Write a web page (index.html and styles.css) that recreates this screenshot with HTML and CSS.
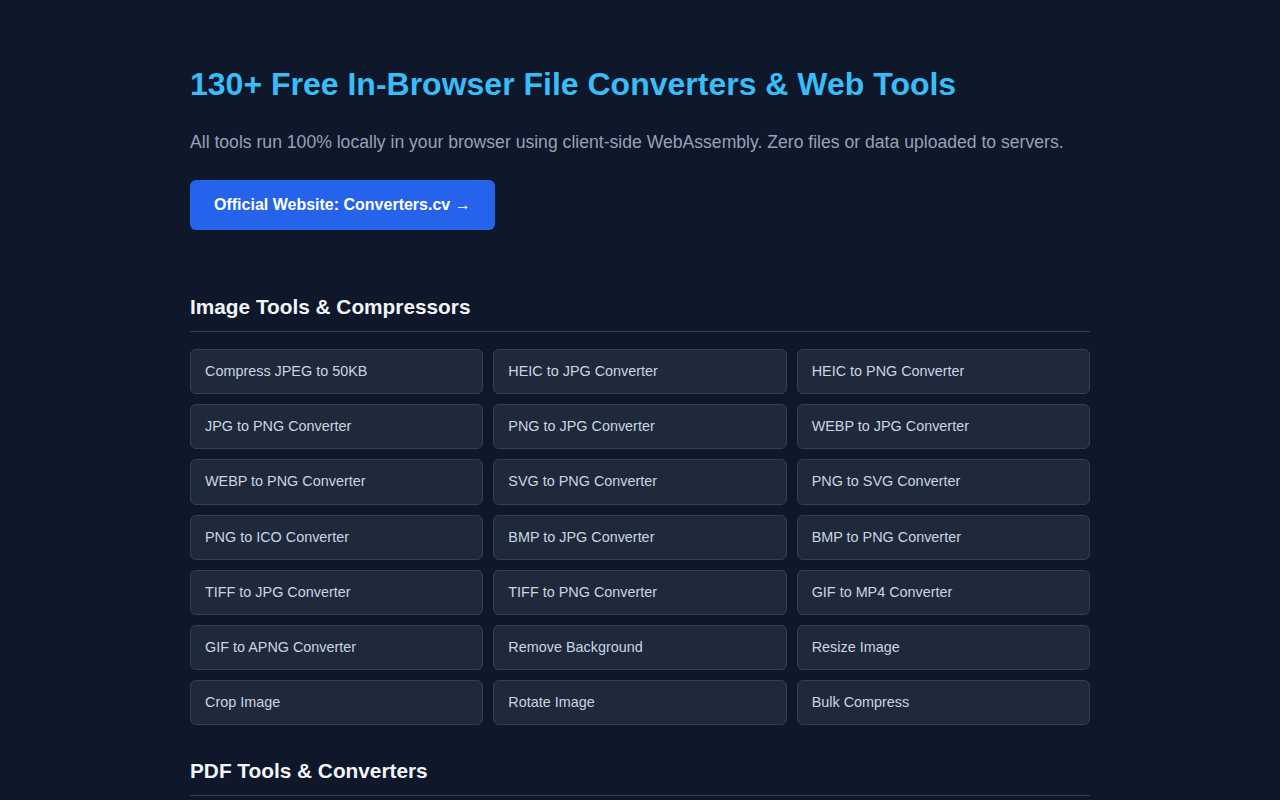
FILE: index.html
```html
<!DOCTYPE html>
<html lang="en">
<head>
<meta charset="utf-8">
<title>130+ Free In-Browser File Converters &amp; Web Tools</title>
<link rel="stylesheet" href="styles.css">
</head>
<body>
<main class="page">
  <header class="hero">
    <h1 class="hero-title">130+ Free In-Browser File Converters &amp; Web Tools</h1>
    <p class="hero-text">All tools run 100% locally in your browser using client-side WebAssembly. Zero files or data uploaded to servers.</p>
    <a class="hero-btn" href="#">Official Website: Converters.cv →</a>
  </header>

  <section class="section">
    <h2 class="section-title">Image Tools &amp; Compressors</h2>
    <div class="tool-grid">
      <a class="tool" href="#">Compress JPEG to 50KB</a>
      <a class="tool" href="#">HEIC to JPG Converter</a>
      <a class="tool" href="#">HEIC to PNG Converter</a>
      <a class="tool" href="#">JPG to PNG Converter</a>
      <a class="tool" href="#">PNG to JPG Converter</a>
      <a class="tool" href="#">WEBP to JPG Converter</a>
      <a class="tool" href="#">WEBP to PNG Converter</a>
      <a class="tool" href="#">SVG to PNG Converter</a>
      <a class="tool" href="#">PNG to SVG Converter</a>
      <a class="tool" href="#">PNG to ICO Converter</a>
      <a class="tool" href="#">BMP to JPG Converter</a>
      <a class="tool" href="#">BMP to PNG Converter</a>
      <a class="tool" href="#">TIFF to JPG Converter</a>
      <a class="tool" href="#">TIFF to PNG Converter</a>
      <a class="tool" href="#">GIF to MP4 Converter</a>
      <a class="tool" href="#">GIF to APNG Converter</a>
      <a class="tool" href="#">Remove Background</a>
      <a class="tool" href="#">Resize Image</a>
      <a class="tool" href="#">Crop Image</a>
      <a class="tool" href="#">Rotate Image</a>
      <a class="tool" href="#">Bulk Compress</a>
    </div>
  </section>

  <section class="section">
    <h2 class="section-title">PDF Tools &amp; Converters</h2>
  </section>
</main>
</body>
</html>
```

FILE: styles.css
```css
html, body {
  margin: 0;
  padding: 0;
  background: #0f172a;
}

body {
  font-family: "Liberation Sans", Arial, sans-serif;
  color: #cbd5e1;
}

.page {
  max-width: 900px;
  margin: 0 auto;
  padding: 65px 0 40px;
}

.hero {
  margin-bottom: 63px;
}

.hero-title {
  margin: 0;
  font-size: 32px;
  line-height: 38px;
  font-weight: 700;
  color: #38bdf8;
}

.hero-text {
  margin: 25px 0 23px;
  font-size: 17.6px;
  line-height: 29px;
  color: #94a3b8;
}

.hero-btn {
  display: inline-block;
  padding: 16px 24px;
  font-size: 16px;
  line-height: 18px;
  font-weight: 700;
  color: #ffffff;
  background: #2563eb;
  border-radius: 6px;
  text-decoration: none;
}

.section + .section {
  margin-top: 32px;
}

.section-title {
  margin: 0 0 17px;
  padding-bottom: 11px;
  border-bottom: 1px solid #334155;
  font-size: 20.8px;
  line-height: 27px;
  font-weight: 700;
  color: #f1f5f9;
}

.tool-grid {
  display: grid;
  grid-template-columns: repeat(3, 1fr);
  gap: 10px;
}

.tool {
  display: block;
  padding: 12px 14px;
  font-size: 14.4px;
  line-height: 19.2px;
  color: #cbd5e1;
  background: #1e293b;
  border: 1px solid #334155;
  border-radius: 6px;
  text-decoration: none;
}
```
